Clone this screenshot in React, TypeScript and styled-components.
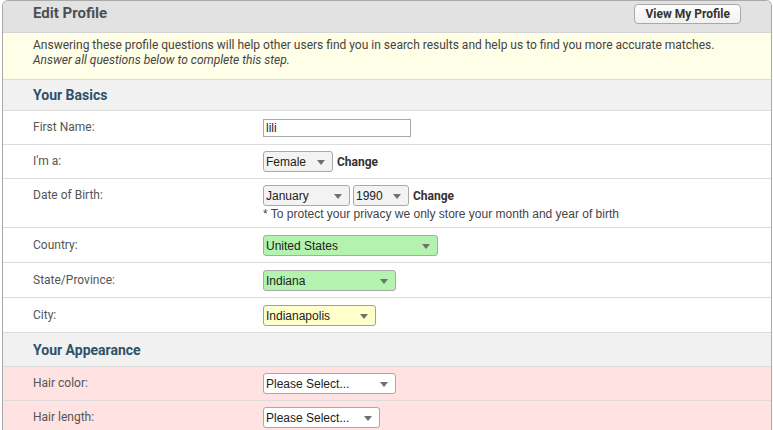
import styled, { createGlobalStyle } from "styled-components";

const GlobalStyle = createGlobalStyle`
  html, body {
    margin: 0;
    padding: 0;
    background: #ffffff;
  }
  body {
    font-family: Roboto, "Liberation Sans", Arial, sans-serif;
    font-size: 12px;
    color: #555;
  }
`;

type Tone = "plain" | "ok" | "focus" | "white";

const TONE_BG: Record<Tone, string> = {
  plain: "#f3f3f3",
  ok: "#b4f2b0",
  focus: "#ffffcc",
  white: "#ffffff",
};

const Page = styled.div`
  height: 430px;
  overflow: hidden;
  padding: 0 1px 0 2px;
`;

const Panel = styled.div`
  border: 1px solid #a9a9a9;
  border-bottom: none;
  border-radius: 6px 6px 0 0;
  overflow: hidden;
`;

const Header = styled.div`
  display: flex;
  align-items: center;
  justify-content: space-between;
  height: 31px;
  padding: 0 30px;
  background: #e2e2e2;
  border-bottom: 1px solid #d6d6d6;
`;

const Title = styled.h1`
  margin: -7px 0 0;
  font-size: 15px;
  font-weight: 700;
  color: #4b5057;
`;

const ProfileButton = styled.button`
  font-family: Roboto, "Liberation Sans", Arial, sans-serif;
  font-size: 12px;
  font-weight: 700;
  color: #333;
  height: 20px;
  padding: 0 10px;
  margin-top: -6px;
  border: 1px solid #a8a8a8;
  border-radius: 4px;
  background: linear-gradient(#fdfdfd, #f1f1f1);
  cursor: pointer;
`;

const Intro = styled.div`
  background: #fffee6;
  padding: 5px 30px 11px;
  line-height: 15px;
  color: #444;
  border-bottom: 1px solid #dcdcd0;

  em {
    display: block;
  }
`;

const SectionHead = styled.div<{ $h?: number }>`
  height: ${(p) => p.$h ?? 30}px;
  display: flex;
  align-items: center;
  padding: 0 30px;
  background: #f1f1f1;
  border-bottom: 1px solid #dcdcdc;
  font-size: 14px;
  font-weight: 700;
  color: #2d5169;
`;

const Row = styled.div<{ $pink?: boolean; $tall?: boolean }>`
  display: flex;
  align-items: flex-start;
  padding: ${(p) => (p.$tall ? "7px 30px 6px" : "6px 30px 6px")};
  background: ${(p) => (p.$pink ? "#ffe3e3" : "#ffffff")};
  border-bottom: 1px solid #dcdcdc;
`;

const Label = styled.div`
  width: 230px;
  flex: none;
  line-height: 21px;
  color: #555;
`;

const Field = styled.div`
  display: flex;
  flex-direction: column;
`;

const Controls = styled.div`
  display: flex;
  align-items: center;
  gap: 3px;
  height: 21px;
`;

const TextInput = styled.input`
  box-sizing: border-box;
  width: 148px;
  height: 18px;
  margin-top: 2px;
  padding: 0 2px;
  border: 1px solid #a9a9a9;
  font-family: "Liberation Sans", Arial, sans-serif;
  font-size: 12px;
  color: #222;
  outline: none;
`;

const SelectBox = styled.div<{ $w: number; $tone: Tone }>`
  box-sizing: border-box;
  width: ${(p) => p.$w}px;
  height: 21px;
  display: flex;
  align-items: center;
  justify-content: space-between;
  padding: 0 7px 0 2px;
  border: 1px solid ${(p) => (p.$tone === "focus" ? "#7ea6d6" : "#a9a9a9")};
  border-radius: 3px;
  background: ${(p) => TONE_BG[p.$tone]};
  font-family: "Liberation Sans", Arial, sans-serif;
  font-size: 12px;
  color: #222;
`;

const Caret = styled.span`
  width: 0;
  height: 0;
  border-left: 4px solid transparent;
  border-right: 4px solid transparent;
  border-top: 5px solid #707070;
  margin-top: 1px;
`;

const ChangeLink = styled.span`
  font-weight: 700;
  color: #333;
  margin-left: 1px;
`;

const Note = styled.div`
  font-family: "Liberation Sans", Arial, sans-serif;
  font-size: 12px;
  color: #444;
  margin-top: 1px;
  line-height: 14px;
`;

const Select = ({ w, tone = "plain", value }: { w: number; tone?: Tone; value: string }) => (
  <SelectBox $w={w} $tone={tone}>
    <span>{value}</span>
    <Caret />
  </SelectBox>
);

const App = () => {
  return (
    <Page>
      <GlobalStyle />
      <Panel>
        <Header>
          <Title>Edit Profile</Title>
          <ProfileButton>View My Profile</ProfileButton>
        </Header>
        <Intro>
          Answering these profile questions will help other users find you in search results and help us to find you more accurate matches.
          <em>Answer all questions below to complete this step.</em>
        </Intro>

        <SectionHead>Your Basics</SectionHead>
        <Row>
          <Label>First Name:</Label>
          <Field>
            <TextInput defaultValue="lili" />
          </Field>
        </Row>
        <Row>
          <Label>I'm a:</Label>
          <Controls>
            <Select w={70} value="Female" />
            <ChangeLink>Change</ChangeLink>
          </Controls>
        </Row>
        <Row>
          <Label>Date of Birth:</Label>
          <Field>
            <Controls>
              <Select w={87} value="January" />
              <Select w={56} value="1990" />
              <ChangeLink>Change</ChangeLink>
            </Controls>
            <Note>* To protect your privacy we only store your month and year of birth</Note>
          </Field>
        </Row>
        <Row $tall>
          <Label>Country:</Label>
          <Select w={175} tone="ok" value="United States" />
        </Row>
        <Row $tall>
          <Label>State/Province:</Label>
          <Select w={133} tone="ok" value="Indiana" />
        </Row>
        <Row $tall>
          <Label>City:</Label>
          <Select w={113} tone="focus" value="Indianapolis" />
        </Row>

        <SectionHead $h={33}>Your Appearance</SectionHead>
        <Row $pink>
          <Label>Hair color:</Label>
          <Select w={133} tone="white" value="Please Select..." />
        </Row>
        <Row $pink>
          <Label>Hair length:</Label>
          <Select w={117} tone="white" value="Please Select..." />
        </Row>
      </Panel>
    </Page>
  );
};

export default App;
